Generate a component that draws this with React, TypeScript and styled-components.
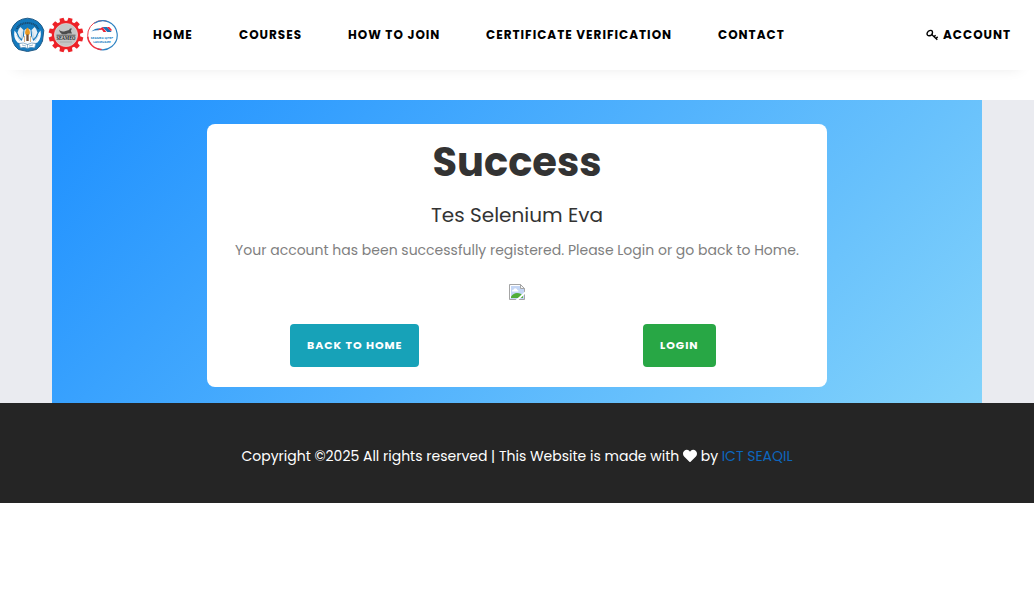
import React from 'react';
import styled, { createGlobalStyle } from 'styled-components';
import { FaHeart } from 'react-icons/fa';

const Global = createGlobalStyle`
  *, *::before, *::after { box-sizing: border-box; }
  body { margin: 0; background: #fff; font-family: Poppins, Inter, "Liberation Sans", sans-serif; color: #7f7f7f; }
  h1, h2, p { margin: 0; }
  a { text-decoration: none; }
  svg { display: block; flex: none; }
`;

const Header = styled.header`
  display: flex;
  align-items: center;
  height: 70px;
  padding: 0 22px 0 10px;
  background: #fff;
  box-shadow: 0 12px 14px -14px rgba(0, 0, 0, 0.1);
`;
const Logos = styled.a`
  display: flex;
  align-items: center;
  gap: 2.5px;
  width: 143px;
`;
const Nav = styled.nav`
  display: flex;
  flex: 1;
  gap: 46px;
`;
const NavLink = styled.a<{ $width: number }>`
  width: ${(p) => p.$width}px;
  white-space: nowrap;
  font-size: 12px;
  line-height: 20px;
  font-weight: 700;
  letter-spacing: 1px;
  text-transform: uppercase;
  color: #000;
`;
const Account = styled.div`
  display: flex;
  align-items: center;
  gap: 4px;
`;

const Main = styled.main`
  margin-top: 30px;
  height: 303px;
  background: #eaebf0;
`;
const Banner = styled.section`
  width: 930px;
  height: 100%;
  margin: 0 auto;
  padding-top: 24px;
  background: linear-gradient(135deg, #1e90ff, #83d3fb);
`;
const Card = styled.article`
  width: 620px;
  height: 263px;
  margin: 0 auto;
  display: flex;
  flex-direction: column;
  align-items: center;
  background: #fff;
  border-radius: 8px;
  white-space: nowrap;
`;
const Title = styled.h1`
  margin-top: 13px;
  font-size: 40px;
  line-height: 50px;
  font-weight: 700;
  color: #333;
`;
const Name = styled.h2`
  margin-top: 13px;
  font-size: 20px;
  line-height: 30px;
  font-weight: 400;
  color: #333;
`;
const Message = styled.p`
  margin-top: 8px;
  font-size: 14px;
  line-height: 24px;
`;
const Picture = styled.div`
  height: 16px;
  margin-top: 22px;
`;
const Actions = styled.div`
  display: grid;
  grid-template-columns: 295px 325px;
  justify-items: center;
  width: 100%;
  margin-top: 24px;
`;
const HomeSlot = styled.div`
  display: flex;
`;
const LoginSlot = styled.div`
  display: flex;
  margin-left: 30px;
`;
const Button = styled.a<{ $color: string; $width: number }>`
  width: ${(p) => p.$width}px;
  height: 43px;
  line-height: 43px;
  padding-left: 17px;
  border-radius: 4px;
  background: ${(p) => p.$color};
  color: #fff;
  font-size: 11px;
  font-weight: 700;
  letter-spacing: 0.96px;
  text-transform: uppercase;
`;
const Footer = styled.footer`
  height: 100px;
  display: flex;
  justify-content: center;
  align-items: center;
  padding-top: 6px;
  background: #252525;
  color: #fff;
  font-size: 14px;
  white-space: pre;
`;
const Heart = styled(FaHeart)`
  width: 14px;
  height: 14px;
  margin: 0 3.5px 0 4px;
`;
const FooterLink = styled.a`
  color: #0d66bd;
  margin-left: 3.5px;
`;
const EmblemText = styled.text`
  font-family: Poppins, sans-serif;
  font-weight: 600;
  text-anchor: middle;
`;
const SerifText = styled(EmblemText)`
  font-family: "Liberation Serif", serif;
  font-weight: 700;
`;

const MinistryLogo = () => (
  <svg width="35" height="36" viewBox="0 0 35 36">
    <path d="M17.500 1.200Q23 1.500 27.500 4.500 32 7.500 33.800 13.500L32.500 24Q30.500 29.500 26.500 32.500L17.500 34.500 8.500 32.500Q4.500 29.500 2.500 24L1.200 13.500Q3 7.500 7.500 4.500 12 1.500 17.500 1.200Z" fill="#1479bd" stroke="#235b87" strokeWidth="1" strokeLinejoin="round" />
    <path d="M6.800 12Q9 6.200 17.500 6 26 6.200 28.200 12" fill="none" stroke="#174c74" strokeWidth="2" strokeDasharray="1.200 .6" />
    <path d="M4.500 13.500Q7 16 8 20L11.500 24 14 19 14.500 13Q17.500 10 20.500 13L21 19 23.500 24 27 20Q28 16 30.500 13.500 32 21 27.500 25.500L23 27H12L7.500 25.500Q3 21 4.500 13.500Z" fill="#f8fafc" />
    <path d="M7.500 15.500Q8 12 10.500 10L13.500 13 12.500 22 9.500 20ZM27.500 15.500Q27 12 24.500 10L21.500 13 22.500 22 25.500 20Z" fill="#e3edf4" />
    <path d="M6.500 18 10 24M28.500 18 25 24M12.500 14.500 11 22M22.500 14.500 24 22" stroke="#a9c8dc" strokeWidth=".6" />
    <path d="M17.500 10.500Q13.500 15 16 18H19Q21.500 15 17.500 10.500Z" fill="#e99a24" />
    <path d="M16.300 17.500H18.700V24H16.300Z" fill="#744f35" />
    <path d="M14.500 19V25M20.500 19V25" stroke="#ca9551" strokeWidth=".7" />
    <path d="M9 26.500Q13.500 25 17.500 27.500 21.500 25 26 26.500L24.500 31Q21 29.500 17.500 31.500 14 29.500 10.500 31Z" fill="#fff" stroke="#578eb4" strokeWidth=".7" />
    <path d="M17.500 27.500V31.500M12 28 16 29M19 29 23 28" stroke="#5386a7" strokeWidth=".6" />
  </svg>
);

const teeth = Array.from({ length: 12 }, (_, i) => i * 30 + 15);

const SeameoLogo = () => (
  <svg width="36" height="36" viewBox="0 0 36 36">
    {teeth.map((angle) => (
      <path key={angle} d="M15.300 6 15.900.6H20.100L20.700 6Z" fill="#ed2228" transform={`rotate(${angle} 18 18)`} />
    ))}
    <circle cx="18" cy="18" r="14.200" fill="#ed2228" />
    <circle cx="18" cy="18" r="11.600" fill="#c5c5c5" stroke="#e9e2df" strokeWidth=".6" />
    <path d="M11 12.500Q12.500 15 16 14.500L21 13 22 11.500H24L22.800 13.800 24 16.500H20L18 17.200H14Q11.500 16 11 12.500Z" fill="#4c4c4c" />
    <path d="M8.500 18.200H27.500" stroke="#4b4b4b" strokeWidth=".9" />
    <SerifText x="18" y="23" fontSize="5.400" textLength="19" lengthAdjust="spacingAndGlyphs" fill="#201e1e">SEAMEO</SerifText>
    <path d="M12 25H24" stroke="#999" strokeWidth=".6" />
  </svg>
);

const LanguageLogo = () => (
  <svg width="32" height="34" viewBox="0 0 33 34">
    <path d="M5.500 27A15 15 0 0 1 22.500 3.200" fill="none" stroke="#ed3341" strokeWidth="1" />
    <path d="M8.500 5A15 15 0 1 1 12 31.300" fill="none" stroke="#2d82c2" strokeWidth="1.200" />
    <path d="M1.700 19A15 15 0 0 0 16 32" fill="none" stroke="#ed3341" strokeWidth="1.500" />
    <path d="M5.500 13.500Q9 9.800 15 10L12.500 12Q9 11.800 5.500 13.500Z" fill="#2475b8" />
    <path d="M12 12 17 8.700 21 13.800H18L16.500 11.500Z" fill="#ed2435" />
    <path d="M17 8.700H21.500L26.500 14H22Z" fill="#1f70b5" />
    <path d="M21.500 8.700H24L27 12 25 12.500Z" fill="#ed2435" />
    <EmblemText x="16.500" y="20.800" fontSize="3.600" textLength="23" lengthAdjust="spacingAndGlyphs" fill="#2382c5">SEAMEO QITEP</EmblemText>
    <EmblemText x="16.500" y="25" fontSize="3.600" textLength="18" lengthAdjust="spacingAndGlyphs" fill="#2382c5">LANGUAGE</EmblemText>
  </svg>
);

const KeyIcon = () => (
  <svg width="13" height="13" viewBox="0 0 13 13" fill="none" stroke="#000">
    <path d="M1.300 5.800C.6 4.500 1.600 2.300 3.600 1.600 5.300 1 6.600 1.800 6.500 3.500 6.400 5.300 4.900 6.700 3.200 6.800 2.300 6.900 1.600 6.500 1.300 5.800Z" strokeWidth="1.400" />
    <path d="M5.700 5.500 11.300 10.700M8.100 7.600 9.600 6.300M10 9.300 11.700 7.900" strokeWidth="1.400" />
  </svg>
);

const BrokenImage = () => (
  <svg width="16" height="16" viewBox="0 0 16 16">
    <path d="M.5.5H11.500L15.500 4.500V15.500H.5Z" fill="#c4d6f5" stroke="#a5a5a5" />
    <path d="M1.500 14.500V1.500H11" fill="none" stroke="#fff" />
    <path d="M11.500.5V4.500H15.500Z" fill="#f4f4f4" stroke="#a5a5a5" />
    <path d="M3 7.500Q2.800 5.500 4.800 5.500 5.500 3.800 7 4.500 8.200 4.700 8.300 6 9.700 6 9.500 7.500Z" fill="#fff" />
    <path d="M2 14V12.500Q4.500 9 8 9 12 9 14 12V14Z" fill="#50ad38" />
    <path d="M16 7.500V10L9.500 16H6.500L10 13Z" fill="#fff" />
  </svg>
);

export default function App() {
  return (
    <>
      <Global />
      <Header>
        <Logos href="#">
          <MinistryLogo />
          <SeameoLogo />
          <LanguageLogo />
        </Logos>
        <Nav>
          <NavLink href="#" $width={40}>Home</NavLink>
          <NavLink href="#" $width={63}>Courses</NavLink>
          <NavLink href="#" $width={92}>How to join</NavLink>
          <NavLink href="#" $width={186}>Certificate verification</NavLink>
          <NavLink href="#" $width={67}>Contact</NavLink>
        </Nav>
        <Account>
          <KeyIcon />
          <NavLink href="#" $width={69}>Account</NavLink>
        </Account>
      </Header>
      <Main>
        <Banner>
          <Card>
            <Title>Success</Title>
            <Name>Tes Selenium Eva</Name>
            <Message>Your account has been successfully registered. Please Login or go back to Home.</Message>
            <Picture><BrokenImage /></Picture>
            <Actions>
              <HomeSlot><Button href="#" $color="#17a2b8" $width={129}>Back to home</Button></HomeSlot>
              <LoginSlot><Button href="#" $color="#28a745" $width={73}>Login</Button></LoginSlot>
            </Actions>
          </Card>
        </Banner>
      </Main>
      <Footer>
        <span>Copyright ©2025 All rights reserved | This Website is made with</span>
        <Heart />
        <span>by</span>
        <FooterLink href="#">ICT SEAQIL</FooterLink>
      </Footer>
    </>
  );
}
